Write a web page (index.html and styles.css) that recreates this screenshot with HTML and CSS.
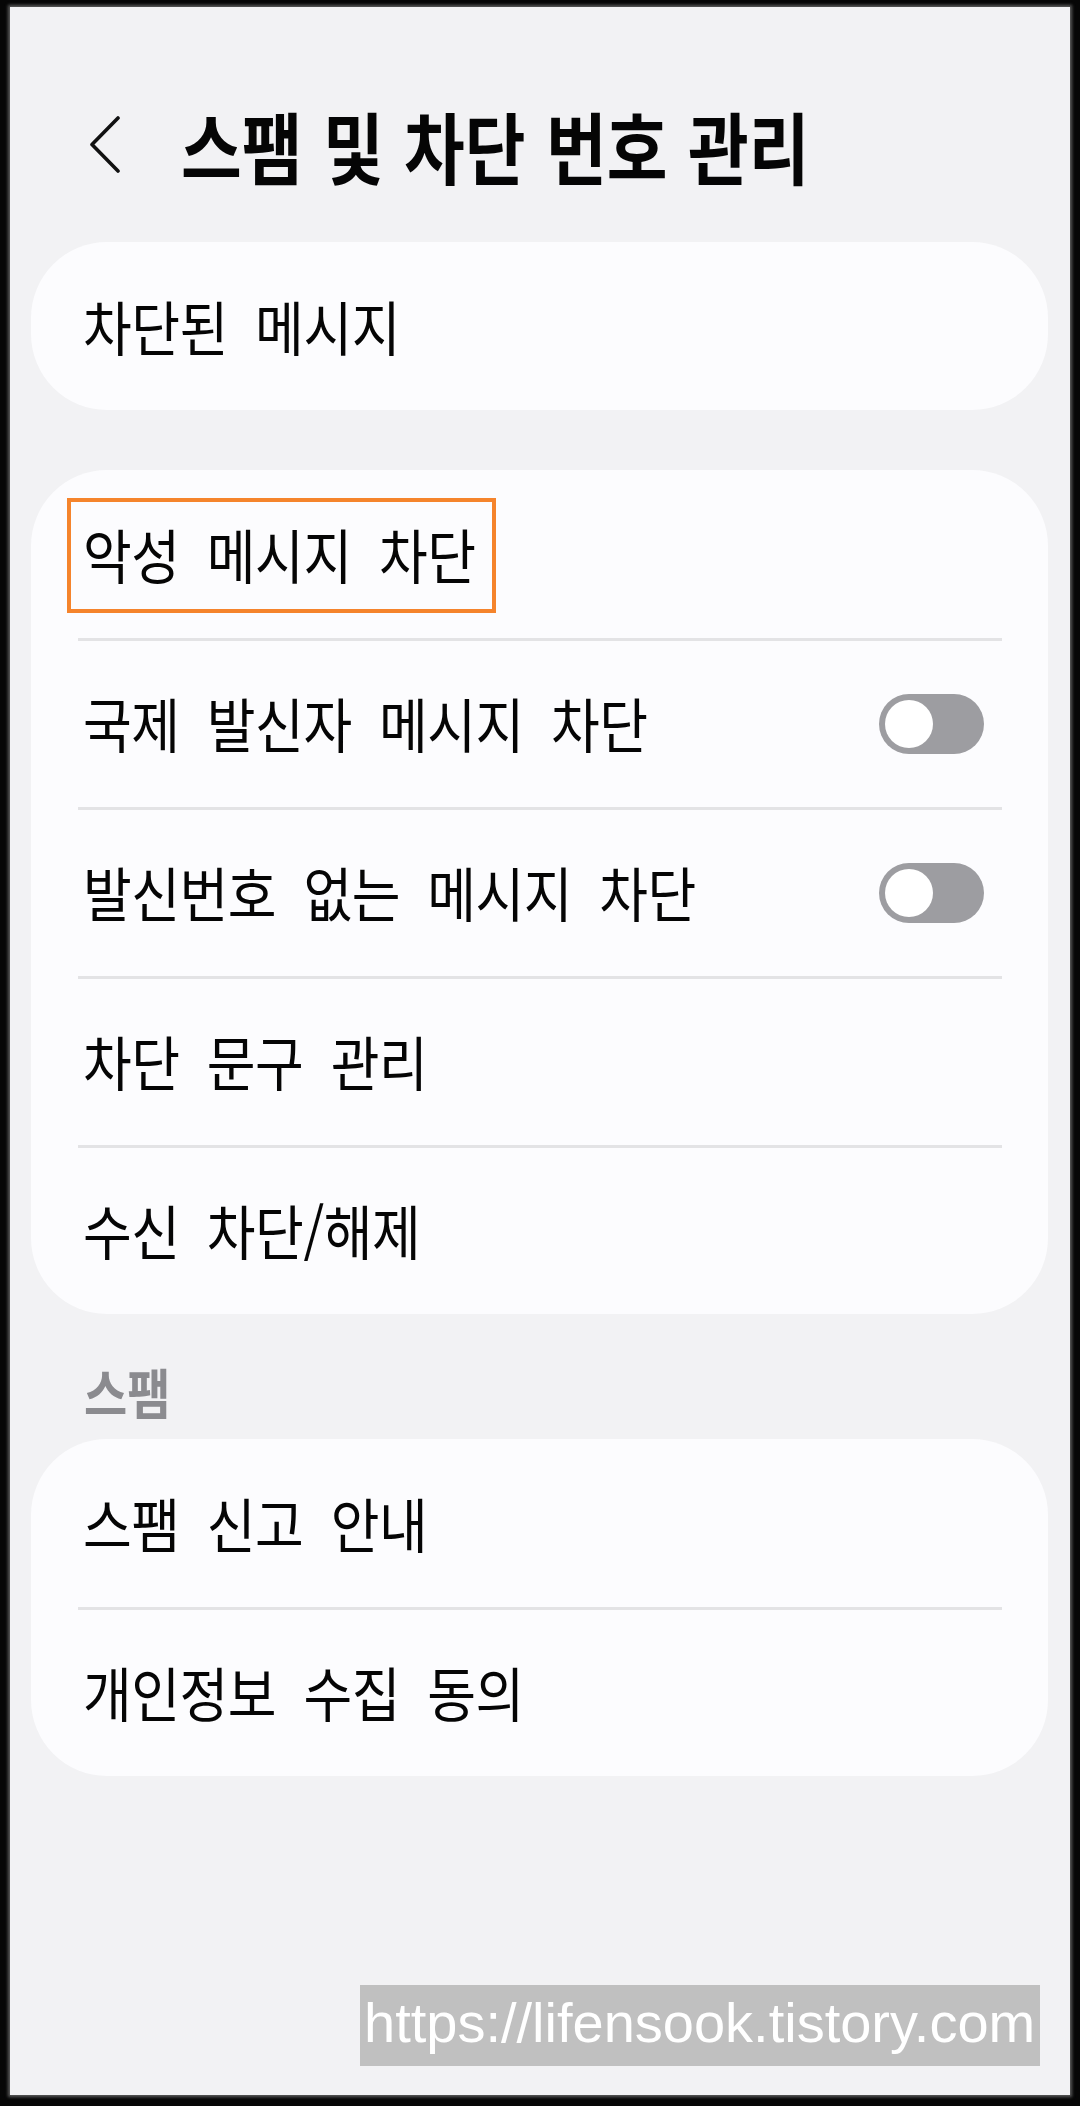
FILE: index.html
```html
<!DOCTYPE html>
<html lang="ko">
<head>
<meta charset="utf-8">
<title>스팸 및 차단 번호 관리</title>
<link rel="stylesheet" href="styles.css">
</head>
<body>
<div class="screen">
  <header class="header">
    <svg class="back" viewBox="0 0 34 60" width="34" height="60" aria-hidden="true">
      <polyline points="30,2 4,28.5 30,55" fill="none" stroke="#111" stroke-width="3.6" stroke-linecap="round" stroke-linejoin="round"/>
    </svg>
    <h1 class="title">스팸 및 차단 번호 관리</h1>
  </header>

  <section class="card">
    <div class="row"><span class="label">차단된 메시지</span></div>
  </section>

  <section class="card card-gap">
    <div class="row">
      <span class="label">악성 메시지 차단</span>
      <div class="highlight"></div>
    </div>
    <div class="divider"></div>
    <div class="row">
      <span class="label">국제 발신자 메시지 차단</span>
      <span class="toggle"><span class="knob"></span></span>
    </div>
    <div class="divider"></div>
    <div class="row">
      <span class="label">발신번호 없는 메시지 차단</span>
      <span class="toggle"><span class="knob"></span></span>
    </div>
    <div class="divider"></div>
    <div class="row"><span class="label">차단 문구 관리</span></div>
    <div class="divider"></div>
    <div class="row"><span class="label">수신 차단/해제</span></div>
  </section>

  <h2 class="section-title"><span class="section-text">스팸</span></h2>

  <section class="card">
    <div class="row"><span class="label">스팸 신고 안내</span></div>
    <div class="divider"></div>
    <div class="row"><span class="label">개인정보 수집 동의</span></div>
  </section>

  <div class="watermark">https://lifensook.tistory.com</div>
</div>
</body>
</html>
```

FILE: styles.css
```css
* {
  box-sizing: border-box;
}

html, body {
  margin: 0;
  padding: 0;
}

body {
  width: 1080px;
  height: 2106px;
  background: #060606;
  overflow: hidden;
  font-family: "Noto Sans CJK KR", "Noto Sans", sans-serif;
}

.screen {
  position: relative;
  width: 1060px;
  height: 2088px;
  margin: 7px 10px 11px 10px;
  padding: 0 22px 0 21px;
  background: #f2f2f4;
  box-shadow: 0 0 3px 2px rgba(150, 150, 150, 0.6);
}

.header {
  display: flex;
  align-items: center;
  height: 120px;
  margin: 0 0 36px 0;
  padding: 79px 0 0 57px;
  box-sizing: content-box;
}

.back {
  flex: none;
  display: block;
}

.title {
  margin: 0 0 0 59px;
  font-size: 66px;
  font-weight: 700;
  line-height: 1.2;
  letter-spacing: 0;
  word-spacing: 2px;
  color: #050505;
  white-space: nowrap;
  transform: scaleY(1.18);
  transform-origin: 50% 54%;
}

.card {
  background: #fcfcfe;
  border-radius: 76px;
  padding-top: 2px;
}

.card-gap {
  margin-top: 60px;
}

.row {
  position: relative;
  display: flex;
  align-items: center;
  justify-content: space-between;
  height: 166px;
  padding: 0 64px 0 52px;
}

.label {
  display: inline-block;
  font-size: 53px;
  font-weight: 400;
  line-height: 1.2;
  letter-spacing: -0.5px;
  word-spacing: 13px;
  color: #050505;
  white-space: nowrap;
  transform: scaleY(1.12);
  transform-origin: 50% 54%;
}

.divider {
  height: 3px;
  margin: 0 46px 0 47px;
  background: #e3e3e5;
}

.highlight {
  position: absolute;
  left: 36px;
  top: 26px;
  width: 429px;
  height: 115px;
  border: 4px solid #f5842c;
}

.toggle {
  position: relative;
  flex: none;
  width: 105px;
  height: 60px;
  border-radius: 30px;
  background: #9d9da1;
}

.knob {
  position: absolute;
  left: 6px;
  top: 6px;
  width: 48px;
  height: 48px;
  border-radius: 50%;
  background: #ffffff;
}

.section-title {
  display: flex;
  align-items: center;
  height: 95px;
  margin: 30px 0 0 0;
  padding-left: 53px;
  font-size: 47px;
  font-weight: 700;
  letter-spacing: 0;
  color: #8b8b8f;
}

.section-text {
  display: inline-block;
  transform: scaleY(1.15);
  transform-origin: 50% 54%;
}

.watermark {
  position: absolute;
  left: 350px;
  top: 1978px;
  width: 680px;
  height: 81px;
  padding-left: 4px;
  background: #c0c0c0;
  color: #ffffff;
  font-family: "Liberation Sans", Arial, sans-serif;
  font-size: 56px;
  line-height: 76px;
  white-space: nowrap;
  overflow: hidden;
}
```
